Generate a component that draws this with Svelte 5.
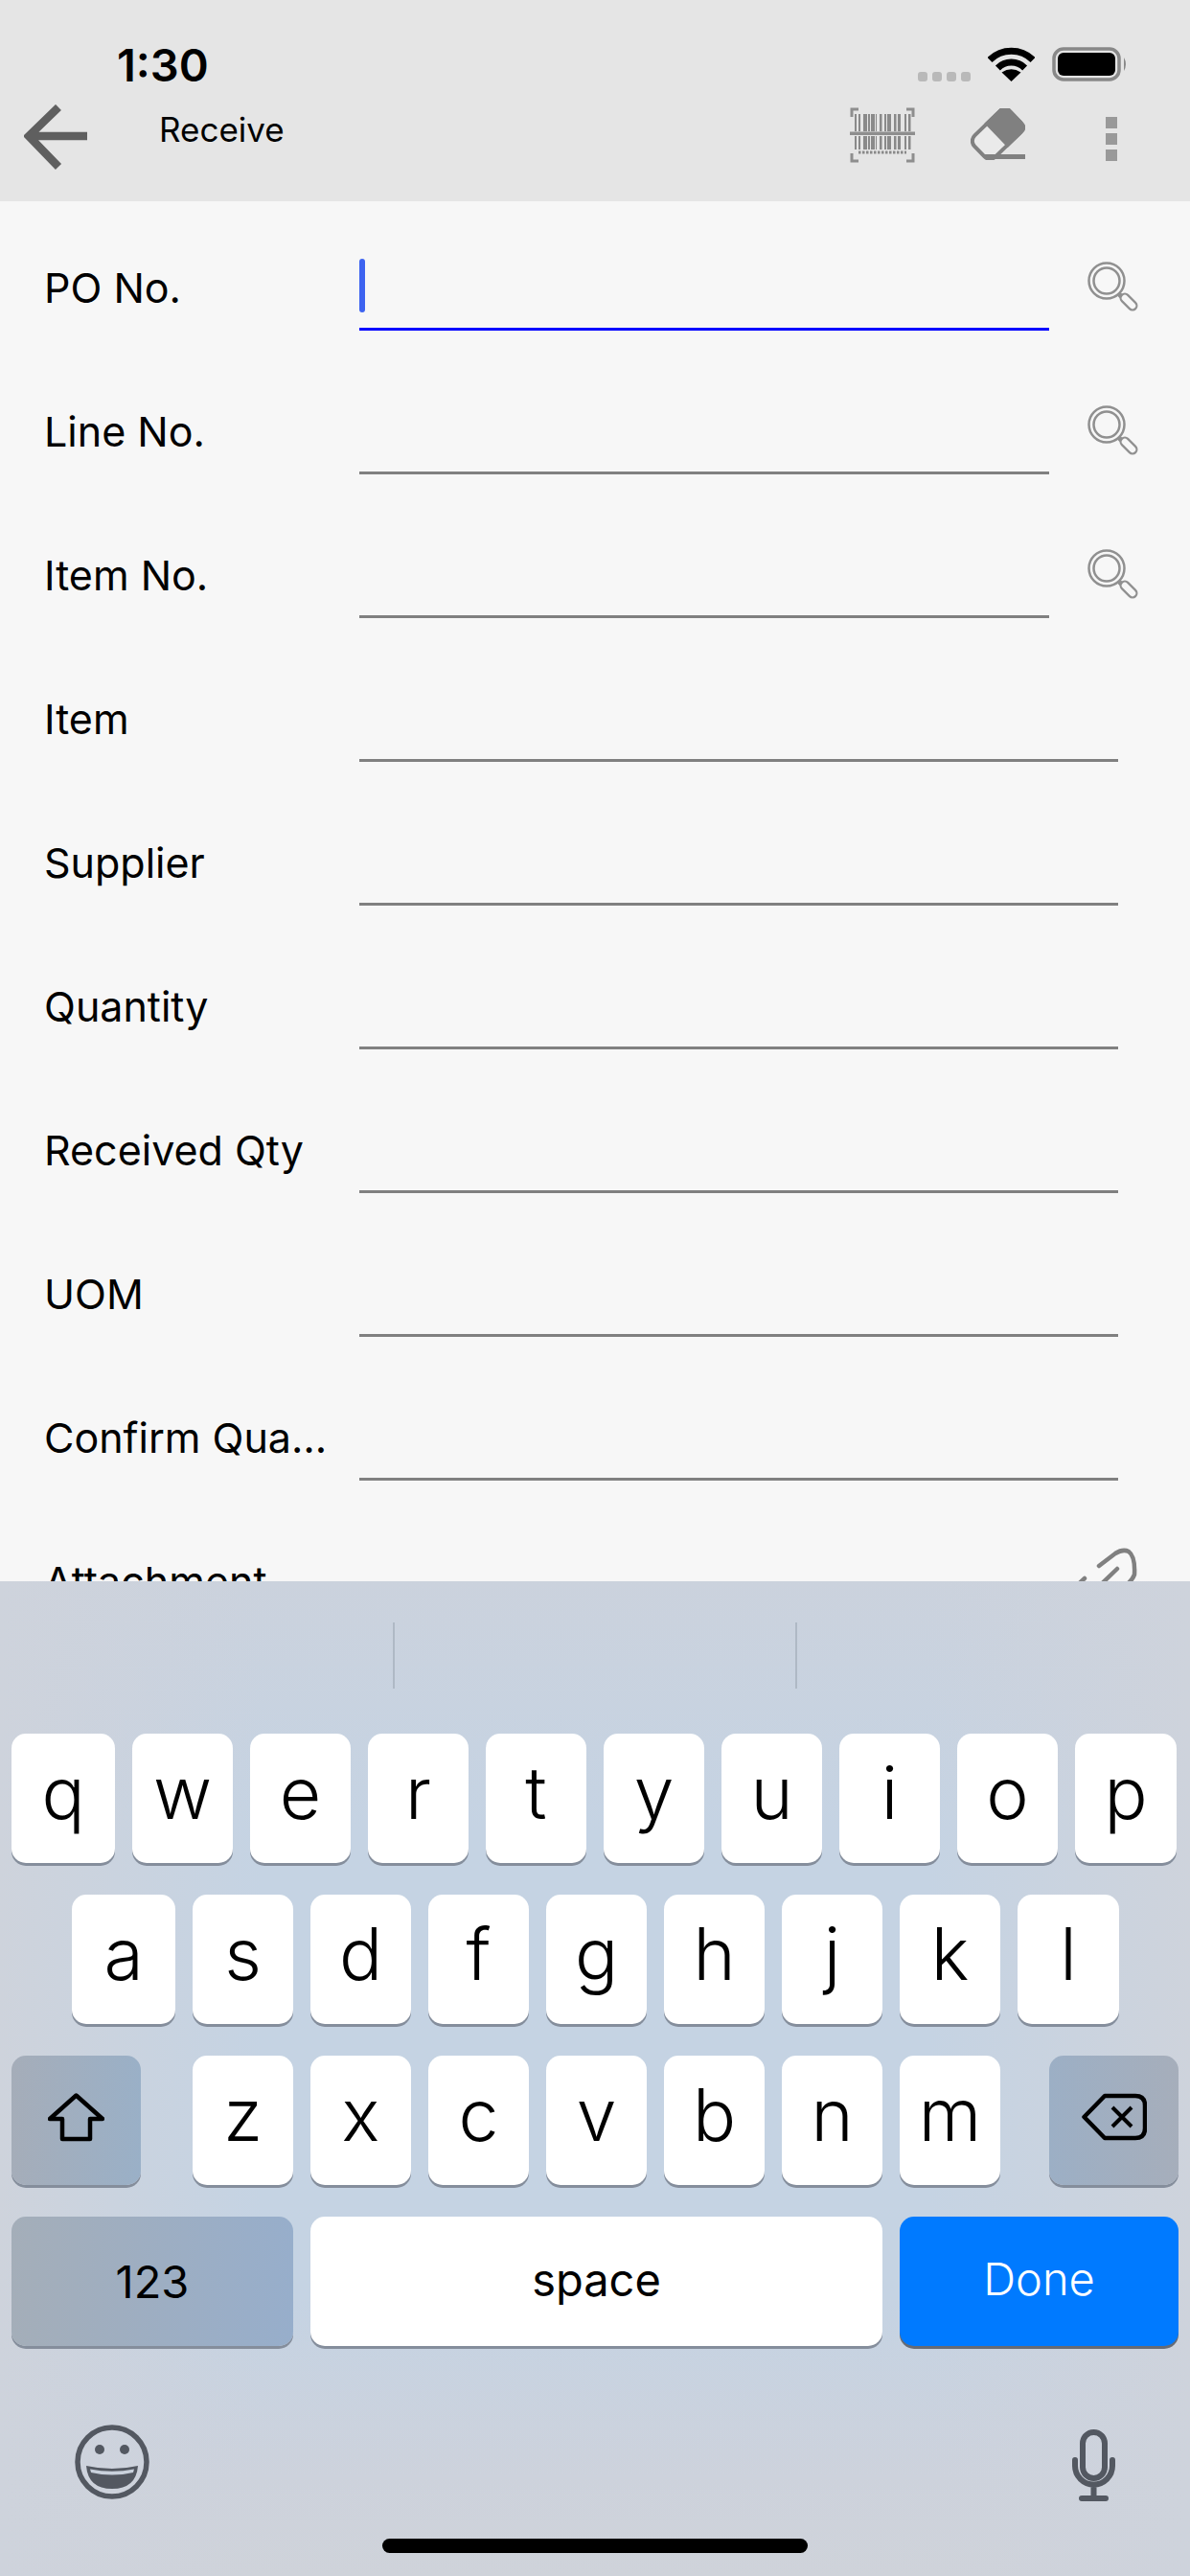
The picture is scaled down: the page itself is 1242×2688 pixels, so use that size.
<script>
  const fields = [
    { label: 'PO No.', search: true, active: true },
    { label: 'Line No.', search: true },
    { label: 'Item No.', search: true },
    { label: 'Item' },
    { label: 'Supplier' },
    { label: 'Quantity' },
    { label: 'Received Qty' },
    { label: 'UOM' },
    { label: 'Confirm Quantity' }
  ];
  const row1 = ['q', 'w', 'e', 'r', 't', 'y', 'u', 'i', 'o', 'p'];
  const row2 = ['a', 's', 'd', 'f', 'g', 'h', 'j', 'k', 'l'];
  const row3 = ['z', 'x', 'c', 'v', 'b', 'n', 'm'];
  // x, width of the barcode bars
  const bars = [[5, 2], [9, 2], [14, 4], [19, 2], [22, 4], [27, 1], [31, 2.5], [36, 2], [39, 4], [46, 2.5], [50, 3], [57, 2], [61, 2.5]];
</script>

<div class="app">
  <header class="header">
    <div class="status">
      <span class="time">1:30</span>
      <div class="status-right">
        <div class="dots">
          <i></i><i></i><i></i><i></i>
        </div>
        <svg width="49" height="36" viewBox="0 0 49 36">
          <path d="M2 13.4a32 32 0 0 1 45 0M10.4 21.9a20 20 0 0 1 28.2 0" fill="none" stroke="#000" stroke-width="7" />
          <path d="M24.5 36l-10-9.5q10-6.5 20 0z" fill="#000" />
        </svg>
        <svg width="79" height="36" viewBox="0 0 79 36">
          <rect x="2" y="2" width="68" height="32" rx="10" fill="none" stroke="#888" stroke-width="3.5" />
          <rect x="6" y="6" width="60" height="24" rx="6" fill="#000" />
          <path d="M75 11q4 7 0 14z" fill="#888" />
        </svg>
      </div>
    </div>
    <div class="toolbar">
      <svg class="back" width="66" height="68" viewBox="0 0 66 68">
        <path d="M36 3L5 33l31 32M5 33h61" fill="none" stroke="#5f5f5f" stroke-width="8.5" />
      </svg>
      <span class="title">Receive</span>
      <div class="actions">
        <svg class="barcode" width="68" height="58" viewBox="0 0 68 58">
          <path d="M9 2H2v8M59 2h7v8M9 56H2v-8M59 56h7v-8" fill="none" stroke="#8e8e8e" stroke-width="3" />
          {#each bars as b}
            <rect x={b[0]} y="7" width={b[1]} height="18" fill="#8a8a8a" />
            <rect x={b[0]} y="30" width={b[1]} height="14" fill="#8a8a8a" />
          {/each}
          <rect x="0" y="25.500" width="68" height="3.500" fill="#8e8e8e" />
          <path d="M9 47h50" stroke="#8a8a8a" stroke-width="3" stroke-dasharray="2.5 1.5" />
        </svg>
        <svg class="eraser" width="57" height="54" viewBox="0 0 57 54">
          <g transform="translate(28 27) rotate(-44)">
            <rect x="-26" y="-15.500" width="52" height="31" rx="8" fill="#eaeaea" stroke="#808080" stroke-width="4" />
            <path d="M-2-17.500H20q8 0 8 8v19q0 8-8 8H-2z" fill="#808080" />
          </g>
          <path d="M15 50.500h42" stroke="#808080" stroke-width="5" />
        </svg>
        <div class="kebab"><i></i><i></i><i></i></div>
      </div>
    </div>
  </header>

  <main class="form">
    {#each fields as field}
      <div class="row">
        <span class="label">{field.label}</span>
        <div class="field" class:active={field.active} class:short={field.search}>
          {#if field.active}<span class="caret"></span>{/if}
        </div>
        {#if field.search}
          <svg class="search" width="54" height="54" viewBox="0 0 54 54">
            <circle cx="21" cy="20" r="18.500" fill="none" stroke="#909090" stroke-width="2.5" />
            <circle cx="21" cy="20" r="13.500" fill="none" stroke="#909090" stroke-width="2.5" />
            <path d="M34 34l3 3" stroke="#909090" stroke-width="5" />
            <path d="M40 38l8 8" stroke="#909090" stroke-width="11" stroke-linecap="round" />
            <path d="M40 38l8 8" stroke="#f7f7f7" stroke-width="6.500" stroke-linecap="round" />
          </svg>
        {/if}
      </div>
    {/each}
    <div class="row">
      <span class="label">Attachment</span>
      <svg class="clip" width="72" height="90" viewBox="0 0 72 90">
        <path d="M28 21L45 8q8-5 14-2 7 5 6 24-2 6-10 12L30 66" fill="none" stroke="#808080" stroke-width="4.5" stroke-linecap="round" />
        <path d="M47 24L20 50M13 34L0 46" fill="none" stroke="#808080" stroke-width="4.5" stroke-linecap="round" />
      </svg>
    </div>
  </main>

  <section class="keyboard">
    <div class="candidates"><div class="cell"></div></div>
    <div class="keys">
      <div class="key-row">
        {#each row1 as k}<div class="key">{k}</div>{/each}
      </div>
      <div class="key-row second">
        {#each row2 as k}<div class="key">{k}</div>{/each}
      </div>
      <div class="key-row">
        <div class="key fn shift">
          <svg width="59" height="51" viewBox="0 0 59 51">
            <path d="M29.5 2.5L57 27H44v21H15V27H2z" fill="none" stroke="#000" stroke-width="4.5" stroke-linejoin="round" />
          </svg>
        </div>
        {#each row3 as k}<div class="key">{k}</div>{/each}
        <div class="key fn delete">
          <svg width="68" height="50" viewBox="0 0 68 50">
            <path d="M2.5 25L24 3h32q10 0 10 10v24q0 10-10 10H24z" fill="none" stroke="#000" stroke-width="4.5" stroke-linejoin="round" />
            <path d="M32 15l20 20M52 15L32 35" stroke="#000" stroke-width="4" />
          </svg>
        </div>
      </div>
      <div class="key-row">
        <div class="key fn num">123</div>
        <div class="key space">space</div>
        <div class="key done">Done</div>
      </div>
    </div>
    <div class="bottom">
      <svg width="78" height="78" viewBox="0 0 78 78">
        <circle cx="39" cy="39" r="36" fill="none" stroke="#535861" stroke-width="5.5" />
        <circle cx="26" cy="26" r="5" fill="#535861" />
        <circle cx="52" cy="26" r="5" fill="#535861" />
        <path d="M12 43Q39 49 66 43 64 67 39 67 14 67 12 43z" fill="#535861" />
        <path d="M16 46.5Q39 51 62 46.500L61 50Q39 55 17 50z" fill="#c9d1dc" />
      </svg>
      <svg class="mic" width="45" height="75" viewBox="0 0 45 75">
        <rect x="11" y="3" width="23" height="48" rx="11.500" fill="none" stroke="#535861" stroke-width="6" />
        <path d="M3 32v6a19.500 19.500 0 0 0 39 0v-6M22.500 58v13M10 72h25" fill="none" stroke="#535861" stroke-width="6" stroke-linecap="round" />
      </svg>
    </div>
    <div class="home"></div>
  </section>
</div>

<style>
  :global(body) {
    margin: 0;
  }

  .app {
    width: 1242px;
    height: 2688px;
    display: flex;
    flex-direction: column;
    overflow: hidden;
    background: #f7f7f7;
    font-family: Inter, 'Liberation Sans', sans-serif;
    color: #000;
  }

  svg {
    display: block;
    flex: none;
  }

  .header {
    height: 210px;
    flex: none;
    background: #e5e5e5;
  }

  .status {
    height: 100px;
    box-sizing: border-box;
    display: flex;
    justify-content: space-between;
    padding: 0 65px 15px 122px;
  }

  .time {
    font-size: 47px;
    font-weight: 600;
    line-height: 57px;
    margin-top: 39px;
  }

  .status-right {
    display: flex;
    align-items: flex-end;
    gap: 18px;
  }

  .dots {
    display: flex;
    gap: 5px;
  }

  .dots i {
    width: 10px;
    height: 10px;
    border-radius: 3px;
    background: #b9b9b9;
  }

  .toolbar {
    display: flex;
    align-items: flex-start;
    padding: 9px 76px 0 25px;
  }

  .title {
    font-size: 35px;
    line-height: 44px;
    margin: 4px 0 0 75px;
  }

  .actions {
    display: flex;
    align-items: flex-start;
    margin-left: auto;
  }

  .barcode {
    margin-top: 3px;
    filter: blur(0.7px);
  }

  .eraser {
    margin: 4px 0 0 58px;
    filter: blur(0.5px);
  }

  .kebab {
    display: flex;
    flex-direction: column;
    gap: 5px;
    margin: 13px 0 0 84px;
  }

  .kebab i {
    width: 12px;
    height: 12px;
    background: #999;
  }

  .form {
    flex: 1;
    min-height: 0;
    overflow: hidden;
  }

  .row {
    display: flex;
    height: 135px;
    margin-bottom: 15px;
    padding: 0 54px 0 46px;
  }

  .label {
    width: 299px;
    margin-right: 30px;
    padding-top: 60px;
    box-sizing: border-box;
    flex: none;
    font-size: 43px;
    line-height: 60px;
    white-space: nowrap;
    overflow: hidden;
    text-overflow: ellipsis;
    height: 135px;
  }

  .field {
    flex: 1;
    margin-right: 21px;
    border-bottom: 3px solid #808080;
    box-sizing: border-box;
    padding-top: 60px;
  }

  .field.short {
    margin-right: 39px;
  }

  .field.active {
    border-bottom: 3px solid #0000ff;
  }

  .caret {
    display: block;
    width: 6px;
    height: 56px;
    border-radius: 3px;
    background: #3d63f0;
  }

  .search {
    margin-top: 63px;
  }

  .clip {
    margin: 53px -3px 0 auto;
  }

  .keyboard {
    height: 1038px;
    flex: none;
    background:
      linear-gradient(90deg, #ced3dc 0, rgba(206, 211, 220, 0) 22%, rgba(206, 211, 220, 0) 78%, #ced3dc 100%),
      linear-gradient(180deg, #cbd2dd 0, #c5d3e3 25%, #c5d3e3 72%, #cdd2dc 90%, #cfd3da 100%);
  }

  .candidates {
    height: 159px;
    box-sizing: border-box;
    padding: 43px 410px 0;
  }

  .cell {
    height: 69px;
    border-left: 2px solid #afb9c5;
    border-right: 2px solid #afb9c5;
  }

  .keys {
    display: flex;
    flex-direction: column;
    gap: 33px;
    padding-left: 12px;
  }

  .key-row {
    display: flex;
    gap: 18px;
  }

  .key-row.second {
    padding-left: 63px;
  }

  .key {
    width: 105px;
    height: 135px;
    flex: none;
    display: flex;
    align-items: center;
    justify-content: center;
    background: #fff;
    border-radius: 15px;
    box-shadow: 0 3px 0 #858e9c;
    font-size: 75px;
    font-weight: 350;
    padding-bottom: 13px;
    box-sizing: border-box;
  }

  .key-row:first-child .key:first-child,
  .key-row.second .key:first-child {
    width: 108px;
  }

  .key-row:first-child .key:last-child,
  .key-row.second .key:last-child {
    width: 106px;
  }

  .fn {
    background: linear-gradient(90deg, #a5adb9, #9ab0c7);
  }

  .shift {
    width: 135px;
    margin-right: 36px;
    padding: 0 0 7px;
  }

  .delete {
    width: 135px;
    margin-left: 33px;
    padding: 0 0 7px;
    background: linear-gradient(90deg, #9cafc5, #a6aebb);
  }

  .num {
    width: 294px;
    background: linear-gradient(90deg, #a4aeb9, #97aecb);
    font-size: 47px;
    font-weight: 400;
    padding: 0;
  }

  .space {
    width: 597px;
    font-size: 47px;
    font-weight: 400;
    padding: 0 0 5px;
  }

  .done {
    width: 291px;
    background: #007aff;
    color: #fff;
    box-shadow: 0 3px 0 #666b75;
    font-size: 47px;
    font-weight: 300;
    padding: 0 0 7px;
  }

  .bottom {
    display: flex;
    justify-content: space-between;
    align-items: flex-start;
    height: 80px;
    margin-top: 82px;
    padding: 0 78px;
  }

  .mic {
    margin-top: 5px;
  }

  .home {
    width: 444px;
    height: 15px;
    margin: 39px auto 0;
    border-radius: 8px;
    background: #000;
  }
</style>
